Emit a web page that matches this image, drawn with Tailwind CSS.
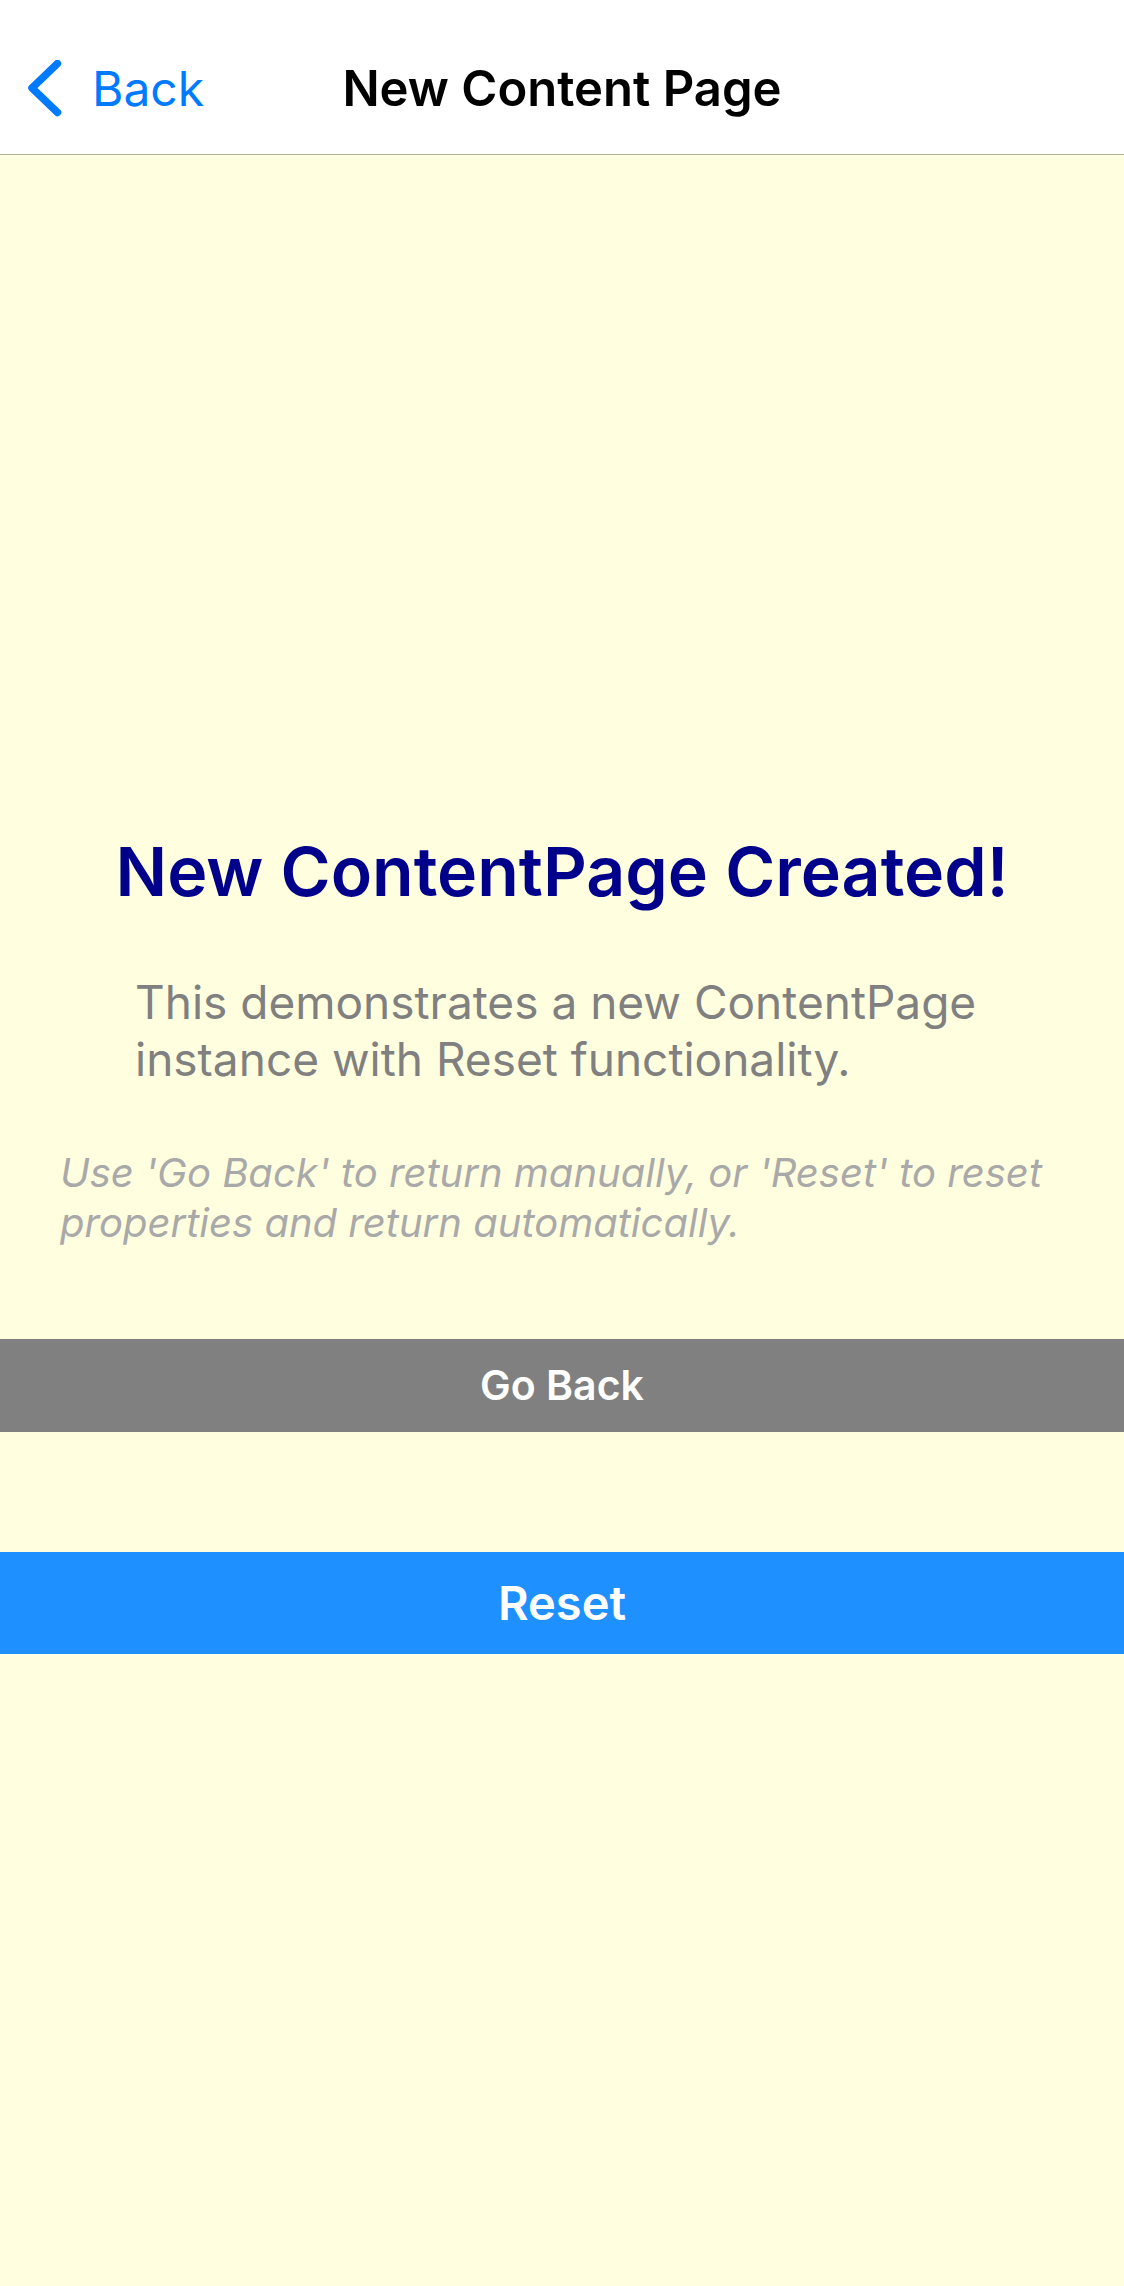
<!DOCTYPE html>
<html lang="en">
<head>
<meta charset="utf-8">
<meta name="viewport" content="width=device-width, initial-scale=1">
<title>New Content Page</title>
<script src="https://cdn.jsdelivr.net/npm/@tailwindcss/browser@4"></script>
</head>
<body class="flex min-h-screen flex-col bg-[#ffffe0] font-['Inter',sans-serif]">
  <header class="grid grid-cols-[1fr_auto_1fr] items-center border-b border-[#b2b29d] bg-white px-7 pt-6">
    <a href="#" class="flex h-[130px] items-center gap-[30px] text-[48px] leading-15 text-[#007aff]">
      <svg class="h-[58px] w-[34px]" viewBox="0 0 34 58" fill="none" stroke="currentColor" stroke-width="7.500" stroke-linecap="round" stroke-linejoin="round" aria-hidden="true"><path d="M29.500 3.500 4 28 29.500 52.500"/></svg>
      <span>Back</span>
    </a>
    <h1 class="text-[49px] leading-15 font-semibold text-black">New Content Page</h1>
  </header>
  <main class="flex flex-1 flex-col justify-center pt-10">
    <h2 class="text-center text-[68px] leading-[86px] font-semibold text-[#00008b]">New ContentPage Created!</h2>
    <p class="mt-15 pr-[120px] pl-[135px] text-[46px] leading-[57px] text-[#808080]">This demonstrates a new ContentPage<br>instance with Reset functionality.</p>
    <p class="mt-15 px-15 text-[40px] leading-[50px] text-[#a9a9a9] italic">Use 'Go Back' to return manually, or 'Reset' to reset<br>properties and return automatically.</p>
    <button type="button" class="mt-[91px] h-[93px] bg-[#808080] text-[41px] leading-[50px] font-semibold text-white">Go Back</button>
    <button type="button" class="mt-30 h-[102px] bg-[#1e90ff] text-[47px] leading-[57px] font-semibold text-white">Reset</button>
  </main>
</body>
</html>
